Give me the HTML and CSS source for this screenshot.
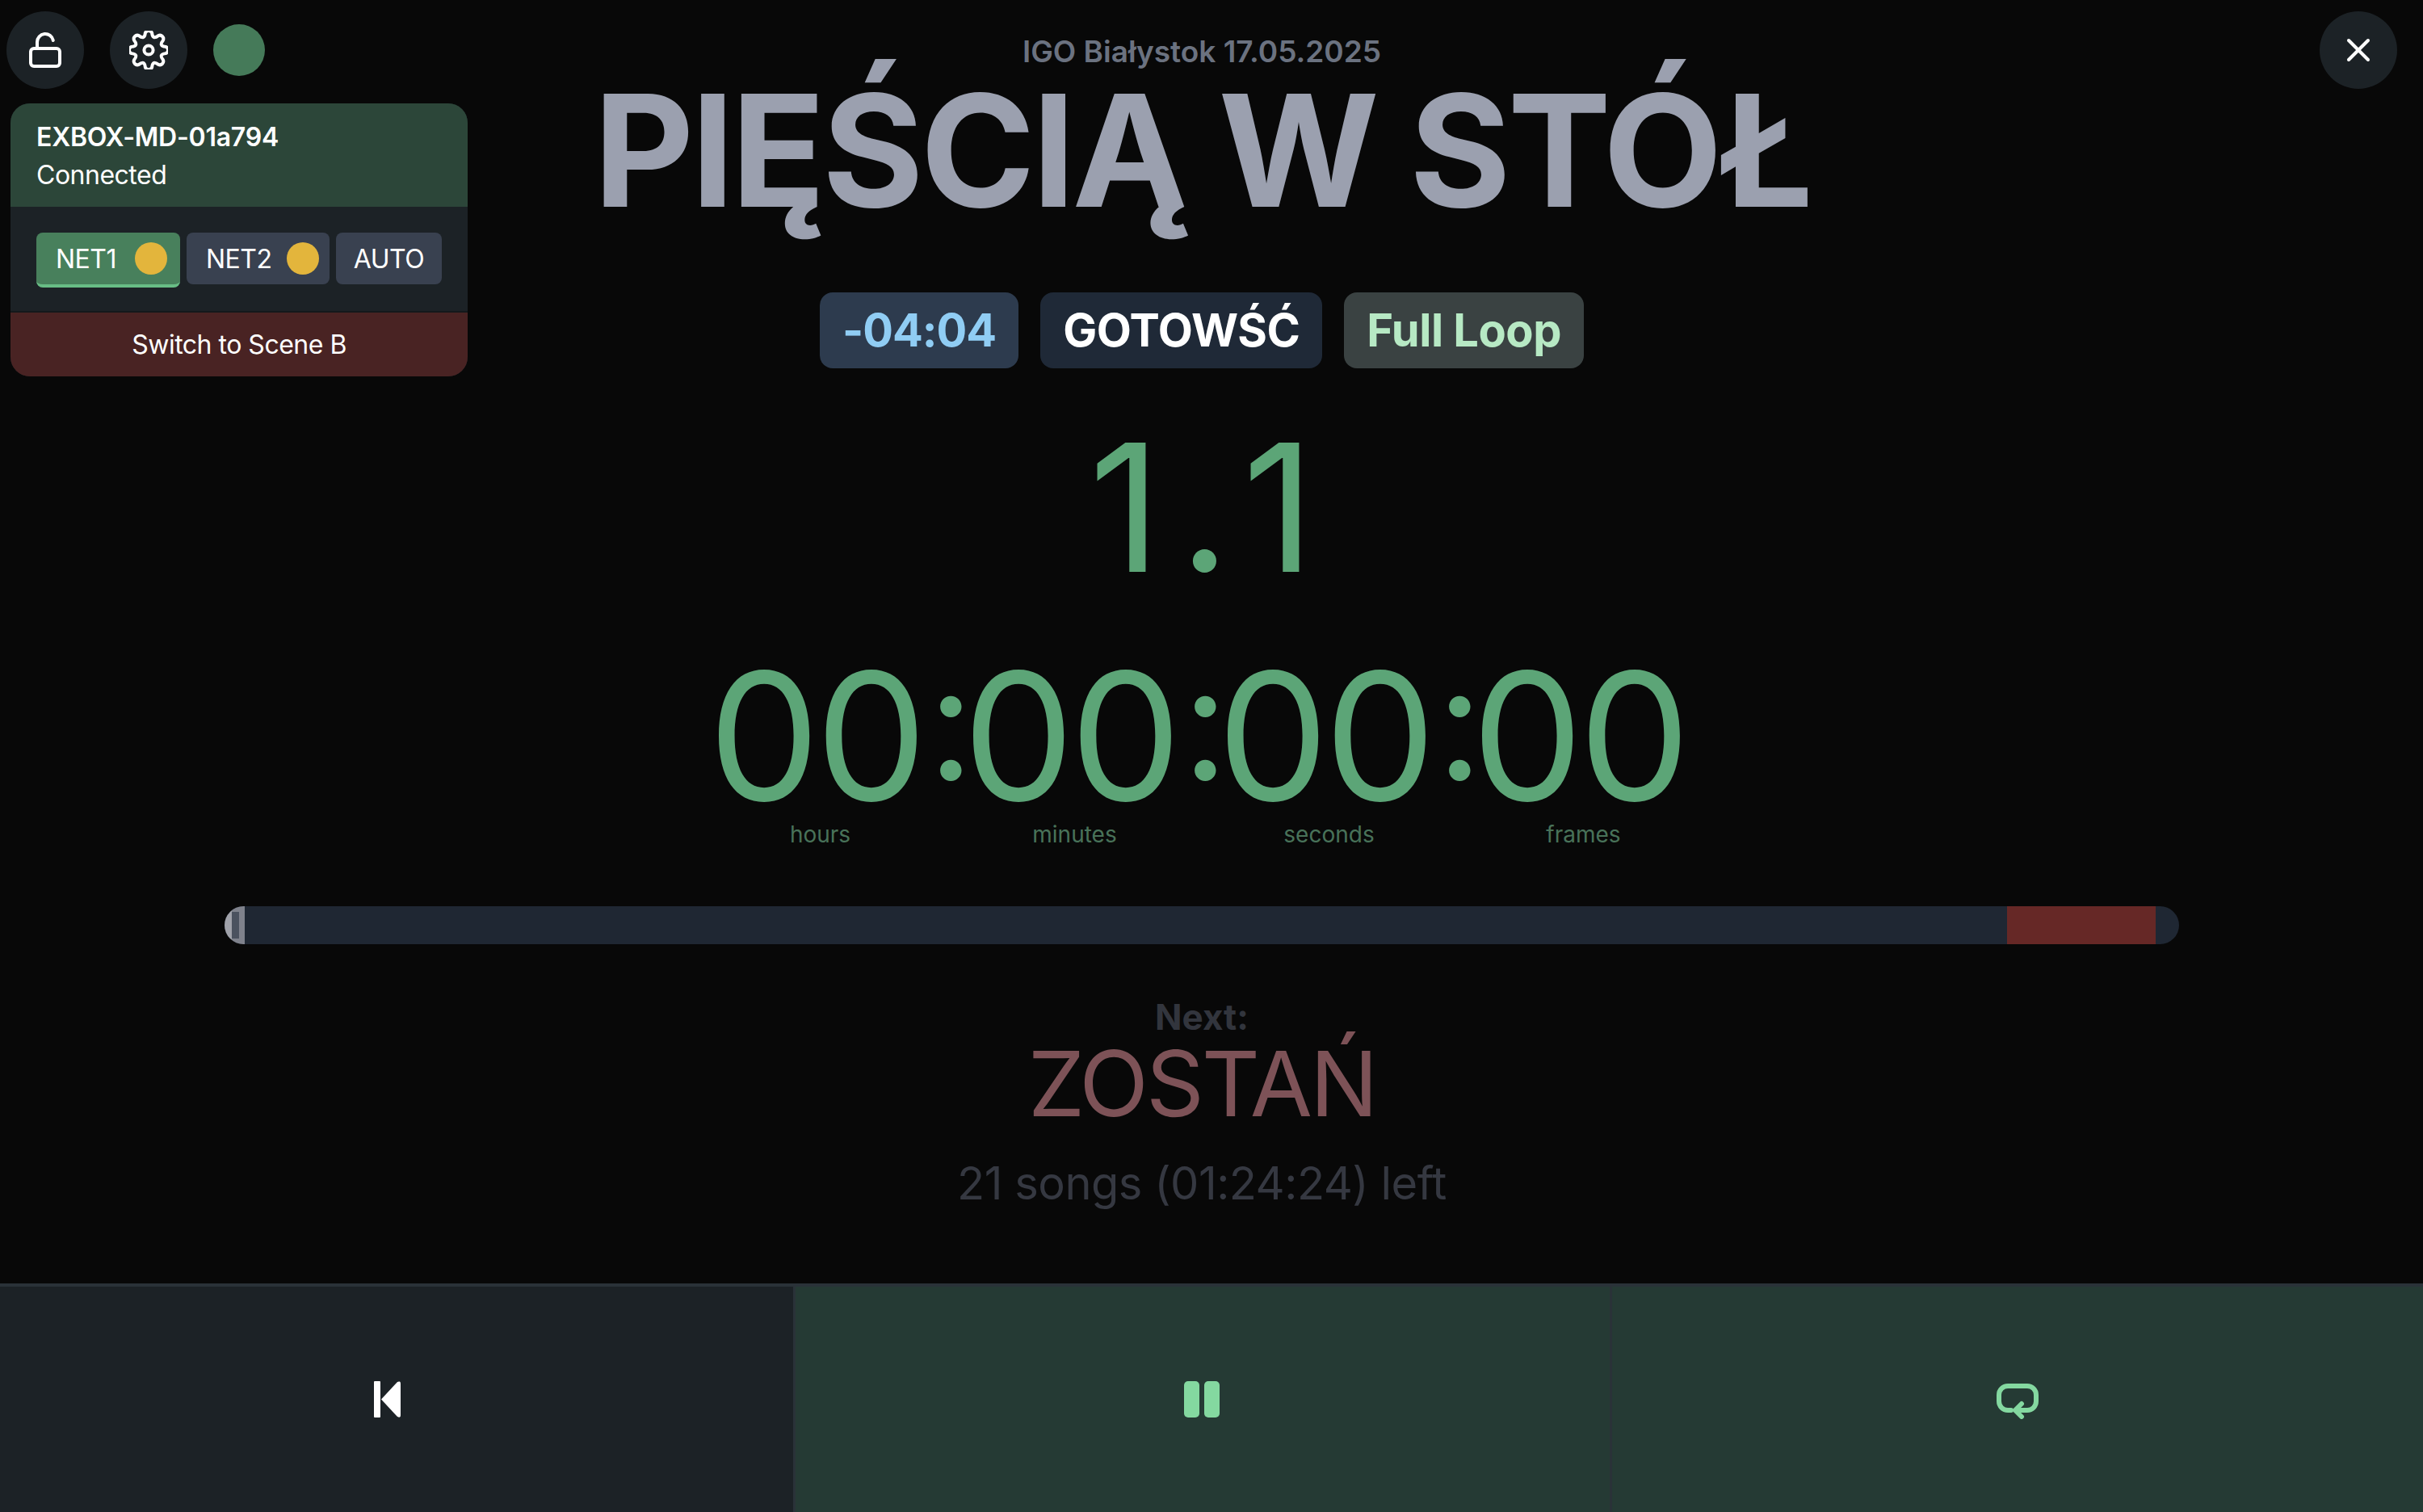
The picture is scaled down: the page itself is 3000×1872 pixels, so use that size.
FILE: index.html
```html
<!DOCTYPE html>
<html lang="en">
<head>
    <meta charset="UTF-8">
    <title>Show Player</title>
    <link rel="stylesheet" href="styles.css">
</head>
<body>

    <div class="overlay">
        <div class="toolbar">
            <button class="round-btn">
                <svg class="icon" viewBox="0 0 24 24"><rect x="3" y="11" width="18" height="11" rx="2"/><path d="M7 11V7a5 5 0 0 1 9.9-1"/></svg>
            </button>
            <button class="round-btn">
                <svg class="icon" viewBox="0 0 24 24"><path d="M9.94 1.4A2.2 2.2 0 0 1 14.06 1.4Q14.53 5.9 18.04 3.05A2.2 2.2 0 0 1 20.95 5.96Q18.1 9.47 22.6 9.94A2.2 2.2 0 0 1 22.6 14.06Q18.1 14.53 20.95 18.04A2.2 2.2 0 0 1 18.04 20.95Q14.53 18.1 14.06 22.6A2.2 2.2 0 0 1 9.94 22.6Q9.47 18.1 5.96 20.95A2.2 2.2 0 0 1 3.05 18.04Q5.9 14.53 1.4 14.06A2.2 2.2 0 0 1 1.4 9.94Q5.9 9.47 3.05 5.96A2.2 2.2 0 0 1 5.96 3.05Q9.47 5.9 9.94 1.4Z"/><circle cx="12" cy="12" r="2.8"/></svg>
            </button>
            <span class="status-dot"></span>
        </div>

        <div class="panel">
            <div class="panel-head">
                <div class="device-name">EXBOX-MD-01a794</div>
                <div class="device-state">Connected</div>
            </div>
            <div class="panel-body">
                <div class="net-btn active">NET1<span class="net-dot"></span></div>
                <div class="net-btn">NET2<span class="net-dot"></span></div>
                <div class="net-btn net-auto">AUTO</div>
            </div>
            <div class="panel-foot">Switch to Scene B</div>
        </div>
    </div>

    <button class="round-btn close-btn">
        <svg class="icon" viewBox="0 0 24 24"><path d="M18 6 6 18"/><path d="m6 6 12 12"/></svg>
    </button>

    <main>
        <p class="event">IGO Białystok 17.05.2025</p>
        <h1 class="song-title">PIĘŚCIĄ W STÓŁ</h1>

        <div class="badges">
            <span class="badge badge-time">-04:04</span>
            <span class="badge badge-state">GOTOWŚĆ</span>
            <span class="badge badge-loop">Full Loop</span>
        </div>

        <div class="cue"><span class="cue-major">1</span><span class="cue-dot">.</span>1</div>

        <div class="timecode">
            <div class="tc-part"><span class="tc-num">00</span><span class="tc-label">hours</span></div>
            <span class="tc-sep">:</span>
            <div class="tc-part"><span class="tc-num">00</span><span class="tc-label">minutes</span></div>
            <span class="tc-sep">:</span>
            <div class="tc-part"><span class="tc-num">00</span><span class="tc-label">seconds</span></div>
            <span class="tc-sep">:</span>
            <div class="tc-part"><span class="tc-num">00</span><span class="tc-label">frames</span></div>
        </div>

        <div class="progress">
            <div class="progress-start"><span class="progress-mark"></span></div>
            <div class="progress-rest"></div>
            <div class="progress-end"></div>
            <div class="progress-tail"></div>
        </div>

        <p class="next-label">Next:</p>
        <p class="next-title">ZOSTAŃ</p>
        <p class="next-left">21 songs (01:24:24) left</p>
    </main>

    <footer class="controls">
        <button class="ctrl ctrl-prev">
            <svg class="ctrl-icon" viewBox="0 0 33 45"><rect x="0" y="0" width="8" height="45" rx="1" fill="#fff"/><path d="M9 22.5 28.5 1.5Q30 0 32 .5 33 1 33 3V42Q33 44 32 44.5 30 45 28.5 43.500Z" fill="#fff"/></svg>
        </button>
        <button class="ctrl ctrl-pause">
            <span class="pause-bar"></span><span class="pause-bar"></span>
        </button>
        <button class="ctrl ctrl-loop">
            <svg class="ctrl-icon" viewBox="0 0 52 44"><path d="M18 33H14A11 11 0 0 1 3 22V14A11 11 0 0 1 14 3H38A11 11 0 0 1 49 14V22A11 11 0 0 1 38 33H24" class="loop-line"/><path d="M31 25 23 33 31 41" class="loop-line"/></svg>
        </button>
    </footer>

</body>
</html>
```

FILE: styles.css
```css
* {
    margin: 0;
    padding: 0;
    box-sizing: border-box;
}
body {
    width: 3000px;
    height: 1872px;
    overflow: hidden;
    display: flex;
    flex-direction: column;
    font-family: 'Inter', 'Liberation Sans', sans-serif;
    background-color: #080808;
    color: #fff;
}
button {
    border: none;
    font-family: inherit;
}

/* top left overlay */
.overlay {
    position: absolute;
    top: 14px;
    left: 8px;
}
.toolbar {
    display: flex;
    align-items: center;
    gap: 32px;
}
.round-btn {
    width: 96px;
    height: 96px;
    border-radius: 50%;
    background-color: #1c2226;
    display: flex;
    align-items: center;
    justify-content: center;
}
.icon {
    width: 48px;
    height: 48px;
    fill: none;
    stroke: #fff;
    stroke-width: 2;
    stroke-linecap: round;
    stroke-linejoin: round;
}
.status-dot {
    width: 64px;
    height: 64px;
    border-radius: 50%;
    background-color: #457a59;
}
.close-btn {
    position: absolute;
    top: 14px;
    right: 32px;
}
.panel {
    width: 566px;
    margin: 18px 0 0 5px;
    border-radius: 24px;
    overflow: hidden;
    background-color: #1c2226;
}
.panel-head {
    height: 128px;
    padding: 18px 32px 0;
    background-color: #2c4639;
    letter-spacing: -0.5px;
}
.device-name {
    font-size: 32px;
    font-weight: 600;
    line-height: 47px;
    letter-spacing: -0.25px;
}
.device-state {
    font-size: 32px;
    line-height: 47px;
}
.panel-body {
    height: 129px;
    padding: 32px 32px 0;
    display: flex;
    align-items: flex-start;
    gap: 8px;
}
.net-btn {
    flex: none;
    width: 177px;
    height: 64px;
    padding: 0 13px 0 24px;
    border-radius: 8px;
    display: flex;
    align-items: center;
    justify-content: space-between;
    font-size: 32px;
    letter-spacing: -0.5px;
    background-color: #394150;
}
.net-btn.active {
    width: 178px;
    height: 68px;
    padding-right: 16px;
    background-color: #48805c;
    border-bottom: 4px solid #68bd85;
}
.net-btn.net-auto {
    width: 131px;
    padding: 0;
    justify-content: center;
}
.net-dot {
    width: 40px;
    height: 40px;
    border-radius: 50%;
    background-color: #e3b53c;
}
.panel-foot {
    height: 81px;
    line-height: 80px;
    text-align: center;
    font-size: 32px;
    letter-spacing: -0.5px;
    background-color: #492323;
    border-top: 2px solid #14181b;
}

/* centre column */
main {
    flex: 1;
    padding-right: 24px;
    display: flex;
    flex-direction: column;
    align-items: center;
    text-align: center;
}
.event {
    margin-top: 40px;
    font-size: 37px;
    line-height: 48px;
    font-weight: 600;
    color: #6b7280;
}
.song-title {
    margin-top: 2px;
    font-size: 192px;
    line-height: 192px;
    font-weight: 700;
    letter-spacing: -4px;
    color: #9ba0af;
    white-space: nowrap;
}
.badges {
    margin-top: 80px;
    display: flex;
    gap: 27px;
}
.badge {
    height: 94px;
    padding: 0 28px;
    border-radius: 16px;
    font-size: 56px;
    line-height: 94px;
    font-weight: 700;
    letter-spacing: -0.5px;
}
.badge-time {
    letter-spacing: -1px;
    background-color: #2d3b4e;
    color: #90cdf4;
}
.badge-state {
    background-color: #1f2937;
}
.badge-loop {
    background-color: #3a4242;
    color: #b7e9c4;
}
.cue {
    margin-top: 28px;
    padding-left: 30px;
    font-size: 220px;
    line-height: 288px;
    letter-spacing: 30px;
    color: #5ca577;
}
.cue-major {
    letter-spacing: 22px;
}
.cue-dot {
    letter-spacing: 15px;
}
.timecode {
    margin-top: 35px;
    display: flex;
    align-items: flex-start;
    color: #5ca577;
}
.tc-part {
    width: 266px;
    display: flex;
    flex-direction: column;
    align-items: center;
}
.tc-num {
    padding-right: 16px;
    font-size: 220px;
    line-height: 208px;
    letter-spacing: -10px;
    font-variant-numeric: tabular-nums;
}
.tc-sep {
    width: 49px;
    padding-right: 6px;
    font-size: 200px;
    line-height: 172px;
    text-align: center;
}
.tc-label {
    font-size: 28px;
    line-height: 36px;
    color: #487259;
}
.progress {
    width: 2420px;
    height: 47px;
    margin-top: 71px;
    border-radius: 24px;
    overflow: hidden;
    display: flex;
    background-color: #1f2733;
}
.progress-start {
    width: 25px;
    background: linear-gradient(to right, #a0a2aa 36%, #7f828c 36%);
    display: flex;
    align-items: center;
    padding-left: 9px;
}
.progress-mark {
    width: 9px;
    height: 33px;
    background-color: #4b525f;
}
.progress-rest {
    flex: 1;
}
.progress-end {
    width: 184px;
    background-color: #662826;
}
.progress-tail {
    width: 29px;
}
.next-label {
    margin-top: 62px;
    font-size: 44px;
    line-height: 56px;
    font-weight: 700;
    color: #32353d;
}
.next-title {
    margin-top: -6px;
    font-size: 112px;
    line-height: 120px;
    letter-spacing: -3px;
    color: #7d5257;
}
.next-left {
    margin-top: 26px;
    font-size: 56px;
    line-height: 76px;
    letter-spacing: -0.5px;
    color: #353841;
}

/* bottom buttons */
.controls {
    height: 283px;
    display: flex;
    border-top: 4px solid #2a3238;
}
.ctrl {
    display: flex;
    align-items: center;
    justify-content: center;
    gap: 6px;
}
.ctrl-prev {
    width: 982px;
    padding-right: 24px;
    background-color: #1c2226;
}
.ctrl-pause {
    width: 1011px;
    padding-right: 3px;
    background-color: #253a34;
    border-left: 3px solid #2a3238;
}
.ctrl-loop {
    flex: 1;
    padding-top: 4px;
    background-color: #253a34;
    border-left: 3px solid #2a3238;
}
.ctrl-prev .ctrl-icon {
    width: 33px;
    height: 45px;
}
.ctrl-loop .ctrl-icon {
    width: 52px;
    height: 44px;
}
.loop-line {
    fill: none;
    stroke: #84d8a0;
    stroke-width: 6;
    stroke-linecap: round;
    stroke-linejoin: round;
}
.pause-bar {
    width: 19px;
    height: 45px;
    border-radius: 5px;
    background-color: #84d8a0;
}
```
